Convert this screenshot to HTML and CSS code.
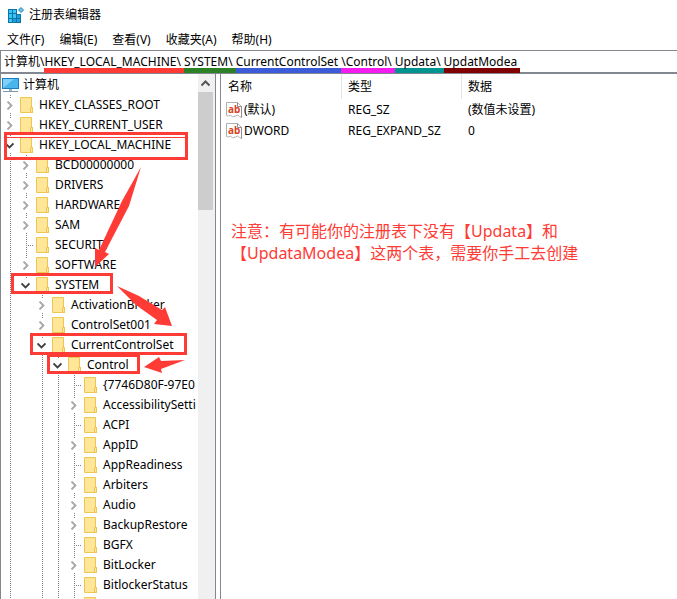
FILE: index.html
```html
<!DOCTYPE html>
<html lang="zh-CN">
<head>
    <meta charset="utf-8">
    <title>注册表编辑器</title>
    <link rel="stylesheet" href="styles.css">
</head>
<body>
    <svg class="defs" width="0" height="0">
        <symbol id="folder" viewBox="0 0 13 16">
            <path d="M.5 .5h11v10h1v5H.5z" fill="#ffe699" stroke="#edc64f"/>
            <path d="M10.500 15.500v-5h2v5z" fill="#ffe699" stroke="#edc64f"/>
        </symbol>
        <symbol id="chevron" viewBox="0 0 9 9">
            <path d="M2.500 .5l4 4-4 4" fill="none" stroke="#a6a6a6" stroke-width="1.800"/>
        </symbol>
        <symbol id="chevronOpen" viewBox="0 0 9 9">
            <path d="M.5 2.500l4 4 4-4" fill="none" stroke="#404040" stroke-width="1.800"/>
        </symbol>
        <symbol id="string" viewBox="0 0 16 16">
            <path d="M.5 .5h11l4 4v11l-2-1-2-1.500-2 1-3 1-2-2-2 1-2-.5z" fill="#fff" stroke="#b0b0b0"/>
            <path d="M11.500 .5v4h4v11" fill="none" stroke="#8f8f8f"/>
        </symbol>
    </svg>

    <header class="titlebar">
        <svg class="appIcon" viewBox="0 0 16 16">
            <path d="M0 2h9v5h4v9H0z" fill="#0b74a8"/>
            <path d="M1 3h3v3H1zM5 3h3v3H5zM1 7h3v4H1zM5 7h3v4H5zM1 12h3v3H1z" fill="#3cc4f5"/>
            <path d="M5 12h3v3H5zM9 12h3v3H9zM9 8h3v3H9z" fill="#1e9fd6"/>
            <path d="M13 .5L15.500 3 13 5.500 10.500 3z" fill="#6cc5ee" stroke="#1c87bb"/>
        </svg>
        <h1 class="title">注册表编辑器</h1>
    </header>

    <nav class="menu">
        <button type="button">文件(F)</button>
        <button type="button">编辑(E)</button>
        <button type="button">查看(V)</button>
        <button type="button">收藏夹(A)</button>
        <button type="button">帮助(H)</button>
    </nav>

    <div class="address">
        <span>计算机\</span><span class="part red">HKEY_LOCAL_MACHINE\</span><span class="part green">SYSTEM\</span><span class="part blue">CurrentControlSet</span><span class="part pink">\Control\</span><span class="part teal">Updata\</span><span class="part maroon">UpdatModea</span>
    </div>

    <main class="panes">
        <section class="treePane">
            <div class="treeView">
                <div class="root">
                    <svg class="computer" viewBox="0 0 17 16">
                        <path d="M0 1h17v11H0z" fill="#1a7fc0"/>
                        <path d="M1 2h15v9H1z" fill="#7fd0f8"/>
                        <path d="M1 11L12 2h4v9z" fill="#4ab4ec"/>
                        <path d="M7 12h3v2H7z" fill="#9fb4c0"/>
                        <path d="M1 14h15v1H1z" fill="#7c97a8"/>
                    </svg>
                    <span>计算机</span>
                </div>
                <ul class="tree">
                    <li>
                        <div class="row"><button type="button" class="toggle" aria-label="展开"><svg><use href="#chevron"/></svg></button><svg class="folder"><use href="#folder"/></svg>HKEY_CLASSES_ROOT</div>
                    </li>
                    <li>
                        <div class="row"><button type="button" class="toggle" aria-label="展开"><svg><use href="#chevron"/></svg></button><svg class="folder"><use href="#folder"/></svg>HKEY_CURRENT_USER</div>
                    </li>
                    <li>
                        <div class="row"><button type="button" class="toggle" aria-label="折叠"><svg><use href="#chevronOpen"/></svg></button><svg class="folder"><use href="#folder"/></svg>HKEY_LOCAL_MACHINE</div>
                        <ul>
                            <li>
                                <div class="row"><button type="button" class="toggle" aria-label="展开"><svg><use href="#chevron"/></svg></button><svg class="folder"><use href="#folder"/></svg>BCD00000000</div>
                            </li>
                            <li>
                                <div class="row"><button type="button" class="toggle" aria-label="展开"><svg><use href="#chevron"/></svg></button><svg class="folder"><use href="#folder"/></svg>DRIVERS</div>
                            </li>
                            <li>
                                <div class="row"><button type="button" class="toggle" aria-label="展开"><svg><use href="#chevron"/></svg></button><svg class="folder"><use href="#folder"/></svg>HARDWARE</div>
                            </li>
                            <li>
                                <div class="row"><button type="button" class="toggle" aria-label="展开"><svg><use href="#chevron"/></svg></button><svg class="folder"><use href="#folder"/></svg>SAM</div>
                            </li>
                            <li>
                                <div class="row leaf"><svg class="folder"><use href="#folder"/></svg>SECURITY</div>
                            </li>
                            <li>
                                <div class="row"><button type="button" class="toggle" aria-label="展开"><svg><use href="#chevron"/></svg></button><svg class="folder"><use href="#folder"/></svg>SOFTWARE</div>
                            </li>
                            <li class="last">
                                <div class="row"><button type="button" class="toggle" aria-label="折叠"><svg><use href="#chevronOpen"/></svg></button><svg class="folder"><use href="#folder"/></svg>SYSTEM</div>
                                <ul>
                                    <li>
                                        <div class="row"><button type="button" class="toggle" aria-label="展开"><svg><use href="#chevron"/></svg></button><svg class="folder"><use href="#folder"/></svg>ActivationBroker</div>
                                    </li>
                                    <li>
                                        <div class="row"><button type="button" class="toggle" aria-label="展开"><svg><use href="#chevron"/></svg></button><svg class="folder"><use href="#folder"/></svg>ControlSet001</div>
                                    </li>
                                    <li>
                                        <div class="row"><button type="button" class="toggle" aria-label="折叠"><svg><use href="#chevronOpen"/></svg></button><svg class="folder"><use href="#folder"/></svg>CurrentControlSet</div>
                                        <ul>
                                            <li>
                                                <div class="row"><button type="button" class="toggle" aria-label="折叠"><svg><use href="#chevronOpen"/></svg></button><svg class="folder"><use href="#folder"/></svg>Control</div>
                                                <ul>
                                                    <li>
                                                        <div class="row leaf"><svg class="folder"><use href="#folder"/></svg>{7746D80F-97E0</div>
                                                    </li>
                                                    <li>
                                                        <div class="row"><button type="button" class="toggle" aria-label="展开"><svg><use href="#chevron"/></svg></button><svg class="folder"><use href="#folder"/></svg>AccessibilitySetti</div>
                                                    </li>
                                                    <li>
                                                        <div class="row leaf"><svg class="folder"><use href="#folder"/></svg>ACPI</div>
                                                    </li>
                                                    <li>
                                                        <div class="row"><button type="button" class="toggle" aria-label="展开"><svg><use href="#chevron"/></svg></button><svg class="folder"><use href="#folder"/></svg>AppID</div>
                                                    </li>
                                                    <li>
                                                        <div class="row leaf"><svg class="folder"><use href="#folder"/></svg>AppReadiness</div>
                                                    </li>
                                                    <li>
                                                        <div class="row"><button type="button" class="toggle" aria-label="展开"><svg><use href="#chevron"/></svg></button><svg class="folder"><use href="#folder"/></svg>Arbiters</div>
                                                    </li>
                                                    <li>
                                                        <div class="row"><button type="button" class="toggle" aria-label="展开"><svg><use href="#chevron"/></svg></button><svg class="folder"><use href="#folder"/></svg>Audio</div>
                                                    </li>
                                                    <li>
                                                        <div class="row"><button type="button" class="toggle" aria-label="展开"><svg><use href="#chevron"/></svg></button><svg class="folder"><use href="#folder"/></svg>BackupRestore</div>
                                                    </li>
                                                    <li>
                                                        <div class="row leaf"><svg class="folder"><use href="#folder"/></svg>BGFX</div>
                                                    </li>
                                                    <li>
                                                        <div class="row"><button type="button" class="toggle" aria-label="展开"><svg><use href="#chevron"/></svg></button><svg class="folder"><use href="#folder"/></svg>BitLocker</div>
                                                    </li>
                                                    <li>
                                                        <div class="row leaf"><svg class="folder"><use href="#folder"/></svg>BitlockerStatus</div>
                                                    </li>
                                                    <li>
                                                        <div class="row leaf"><svg class="folder"><use href="#folder"/></svg></div>
                                                    </li>
                                                </ul>
                                            </li>
                                        </ul>
                                    </li>
                                </ul>
                            </li>
                        </ul>
                    </li>
                </ul>
            </div>
            <div class="scrollbar">
                <button type="button" class="scrollUp" aria-label="向上滚动">
                    <svg viewBox="0 0 9 9"><path d="M.5 6.500l4-4 4 4" fill="none" stroke="#555" stroke-width="2"/></svg>
                </button>
                <div class="thumb"></div>
            </div>

            <!-- boxes and arrows leading to the key -->
            <svg class="marks" viewBox="0 0 200 310">
                <g fill="none" stroke="#ff3b36" stroke-width="3">
                    <path d="M5.500 59.500h181v25h-181z"/>
                    <path d="M12.500 200.500h99v18h-99z"/>
                    <path d="M31.500 260.500h154v19h-154z"/>
                    <path d="M48.500 281.500h90v17h-90z"/>
                </g>
                <path d="M7 63h178v1H7z" fill="#ff3b36"/>
                <g fill="#ff3b36">
                    <path d="M141 93L122 127 99 176 95 174 95 193 109 180 105 178 129 132z"/>
                    <path d="M117 212L139 222 162 236 165 233 172 252 154 250 157 246 136 231z"/>
                    <path d="M185 286L161 287 159 283 144 293 162 299 161 295z"/>
                </g>
            </svg>
        </section>

        <section class="values">
            <table>
                <thead>
                    <tr>
                        <th class="name">名称</th>
                        <th class="type">类型</th>
                        <th>数据</th>
                    </tr>
                </thead>
                <tbody>
                    <tr>
                        <td><div class="value"><span class="valueIcon"><svg><use href="#string"/></svg><b>ab</b></span>(默认)</div></td>
                        <td>REG_SZ</td>
                        <td>(数值未设置)</td>
                    </tr>
                    <tr>
                        <td><div class="value"><span class="valueIcon"><svg><use href="#string"/></svg><b>ab</b></span>DWORD</div></td>
                        <td>REG_EXPAND_SZ</td>
                        <td>0</td>
                    </tr>
                </tbody>
            </table>
            <p class="note">注意：有可能你的注册表下没有【Updata】和<br>【UpdataModea】这两个表，需要你手工去创建</p>
        </section>
    </main>
</body>
</html>
```

FILE: styles.css
```css
* {
    box-sizing: border-box;
}

body {
    display: flex;
    flex-direction: column;
    height: 100vh;
    margin: 0;
    overflow: hidden;
    background: white;
    color: black;
    font: 12px/20px "Noto Sans", "Noto Sans CJK SC", sans-serif;
}

button {
    padding: 0;
    border: 0;
    background: none;
    color: inherit;
    font: inherit;
}

.defs {
    position: absolute;
}

.titlebar {
    display: flex;
    align-items: center;
    gap: 5px;
    height: 30px;
    padding-left: 8px;
}

.appIcon {
    width: 16px;
    height: 16px;
}

.title {
    margin: 0;
    font-size: 12px;
    font-weight: normal;
}

.menu {
    display: flex;
    gap: 15px;
    height: 20px;
    padding-left: 7px;
}

.address {
    display: flex;
    flex: none;
    height: 24px;
    padding-left: 3px;
    border: 1px solid #828790;
    border-width: 1px 0 2px 1px;
    line-height: 21px;
    white-space: nowrap;
}

.part {
    height: 22px;
    padding-right: 3px;
    border-bottom: 5px solid;
}

.part.red { border-color: #ff3b36; }
.part.green { border-color: #2c8025; }
.part.blue { border-color: #3b5bd9; }
.part.pink { border-color: #f51cf0; }
.part.teal { border-color: #009490; }
.part.maroon { border-color: #800000; }

.panes {
    display: flex;
    flex: 1;
    min-height: 0;
}

.treePane {
    position: relative;
    display: flex;
    flex: none;
    width: 216px;
    border: 1px solid #828790;
    border-width: 0 1px 0 1px;
}

.treeView {
    flex: 1;
    overflow: hidden;
    padding-top: 1px;
    padding-left: 1px;
    white-space: nowrap;
}

.root {
    display: flex;
    align-items: center;
    gap: 4px;
    height: 20px;
}

.computer {
    width: 17px;
    height: 16px;
}

.tree,
.tree ul {
    margin: 0;
    padding: 0;
    list-style: none;
}

.tree ul {
    padding-left: 16px;
}

.tree li {
    background: repeating-linear-gradient(#808080 0 1px, transparent 1px 2px) 8px 0 / 1px 100% no-repeat;
}

.tree .last {
    background-size: 1px 10px;
}

.row {
    display: flex;
    align-items: center;
    height: 20px;
    padding-left: 2px;
}

.row.leaf {
    padding-left: 18px;
    background: repeating-linear-gradient(90deg, #808080 0 1px, transparent 1px 2px) 10px 10px / 6px 1px no-repeat;
}

.toggle {
    display: flex;
    align-items: center;
    justify-content: center;
    width: 11px;
    height: 13px;
    margin-right: 5px;
    background: white;
}

.toggle svg {
    width: 9px;
    height: 9px;
}

.folder {
    width: 13px;
    height: 16px;
    margin-right: 6px;
}

.scrollbar {
    width: 17px;
    padding-top: 1px;
    background: #f0f0f0;
}

.scrollUp {
    display: flex;
    align-items: center;
    justify-content: center;
    width: 15px;
    height: 17px;
}

.scrollUp svg {
    width: 9px;
    height: 9px;
}

.thumb {
    width: 15px;
    height: 118px;
    background: #cdcdcd;
}

.marks {
    position: absolute;
    top: 0;
    left: -1px;
    width: 200px;
    height: 310px;
}

.values {
    flex: 1;
    margin-left: 4px;
    border-left: 1px solid #828790;
}

table {
    width: 100%;
    border-spacing: 0;
    table-layout: fixed;
}

th,
td {
    height: 21px;
    padding: 0 0 0 6px;
    font-weight: normal;
    text-align: left;
    white-space: nowrap;
}

th {
    height: 25px;
}

.name,
.type {
    width: 121px;
    border-right: 1px solid #e5e5e5;
}

.type {
    width: 120px;
}

.value {
    display: flex;
    align-items: center;
    gap: 2px;
}

td:first-child {
    padding-left: 5px;
}

th:first-child {
    padding-left: 7px;
}

.valueIcon {
    position: relative;
    width: 16px;
    height: 16px;
}

.valueIcon svg {
    display: block;
    width: 16px;
    height: 16px;
}

.valueIcon b {
    position: absolute;
    top: 0;
    left: 2px;
    color: #d9431f;
    font-size: 10px;
    line-height: 14px;
}

.note {
    margin: 79px 0 0 10px;
    color: #ff3b36;
    font-size: 16px;
    line-height: 22px;
}
```
